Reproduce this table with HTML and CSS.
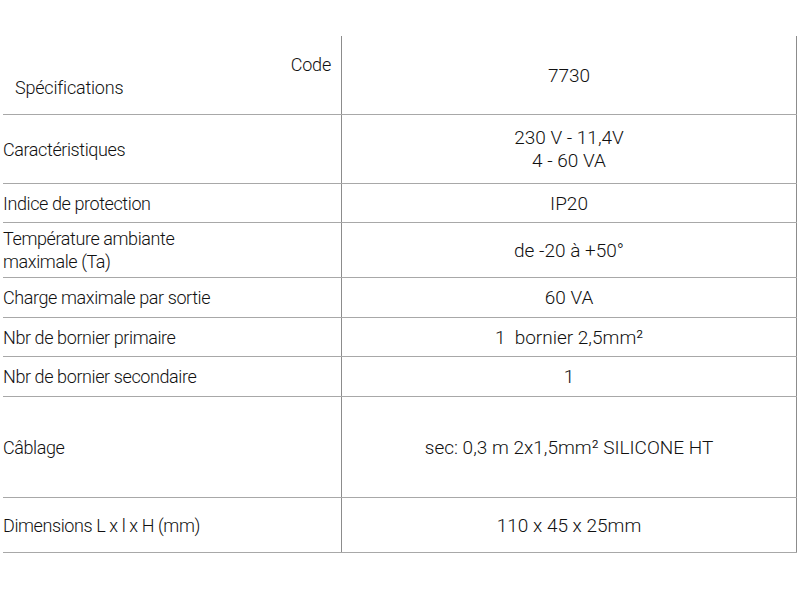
FILE: index.html
```html
<!DOCTYPE html>
<html lang="fr">
<head>
<meta charset="utf-8">
<title>Spécifications 7730</title>
<link rel="stylesheet" href="styles.css">
</head>
<body>
<div class="spec">
  <div class="row head">
    <div class="label head-label">
      <span class="code">Code</span>
      <span class="specs">Spécifications</span>
    </div>
    <div class="value">7730</div>
  </div>
  <div class="row r-car">
    <div class="label">Caractéristiques</div>
    <div class="value">230 V - 11,4V<br>4 - 60 VA</div>
  </div>
  <div class="row r-ip">
    <div class="label">Indice de protection</div>
    <div class="value">IP20</div>
  </div>
  <div class="row r-temp">
    <div class="label">Température ambiante<br>maximale (Ta)</div>
    <div class="value">de -20 à +50°</div>
  </div>
  <div class="row r-charge">
    <div class="label">Charge maximale par sortie</div>
    <div class="value">60 VA</div>
  </div>
  <div class="row r-prim">
    <div class="label">Nbr de bornier primaire</div>
    <div class="value">1&nbsp; bornier 2,5mm²</div>
  </div>
  <div class="row r-sec">
    <div class="label">Nbr de bornier secondaire</div>
    <div class="value">1</div>
  </div>
  <div class="row r-cab">
    <div class="label">Câblage</div>
    <div class="value">sec: 0,3 m 2x1,5mm² SILICONE HT</div>
  </div>
  <div class="row r-dim">
    <div class="label">Dimensions L x l x H (mm)</div>
    <div class="value">110 x 45 x 25mm</div>
  </div>
</div>
</body>
</html>
```
FILE: styles.css
```css
html, body {
  margin: 0;
  padding: 0;
  background: #ffffff;
}
body {
  font-family: Roboto, "Liberation Sans", Arial, sans-serif;
  font-weight: 300;
  font-size: 18px;
  line-height: 23px;
  color: #111111;
}
.spec {
  margin: 36px 0 0 3px;
  width: 794px;
}
.row {
  display: grid;
  grid-template-columns: 339px 455px;
  border-bottom: 1px solid #a8a8a8;
  box-sizing: border-box;
}
.label {
  display: flex;
  align-items: center;
  letter-spacing: -0.4px;
  border-right: 1px solid #8c8c8c;
}
.value {
  display: flex;
  align-items: center;
  justify-content: center;
  text-align: center;
  font-size: 19px;
  letter-spacing: 0;
  border-right: 1px solid #8c8c8c;
}
.head { height: 79px; }
.head-label {
  flex-direction: column;
  align-items: stretch;
  justify-content: flex-start;
  letter-spacing: -0.2px;
  padding: 17px 10px 0 12px;
}
.code { align-self: flex-end; }
.r-car { height: 69px; }
.r-ip { height: 39px; }
.r-temp { height: 55px; }
.r-charge { height: 40px; }
.r-prim { height: 39px; }
.r-sec { height: 40px; }
.r-cab { height: 101px; }
.r-dim { height: 55px; }
```
